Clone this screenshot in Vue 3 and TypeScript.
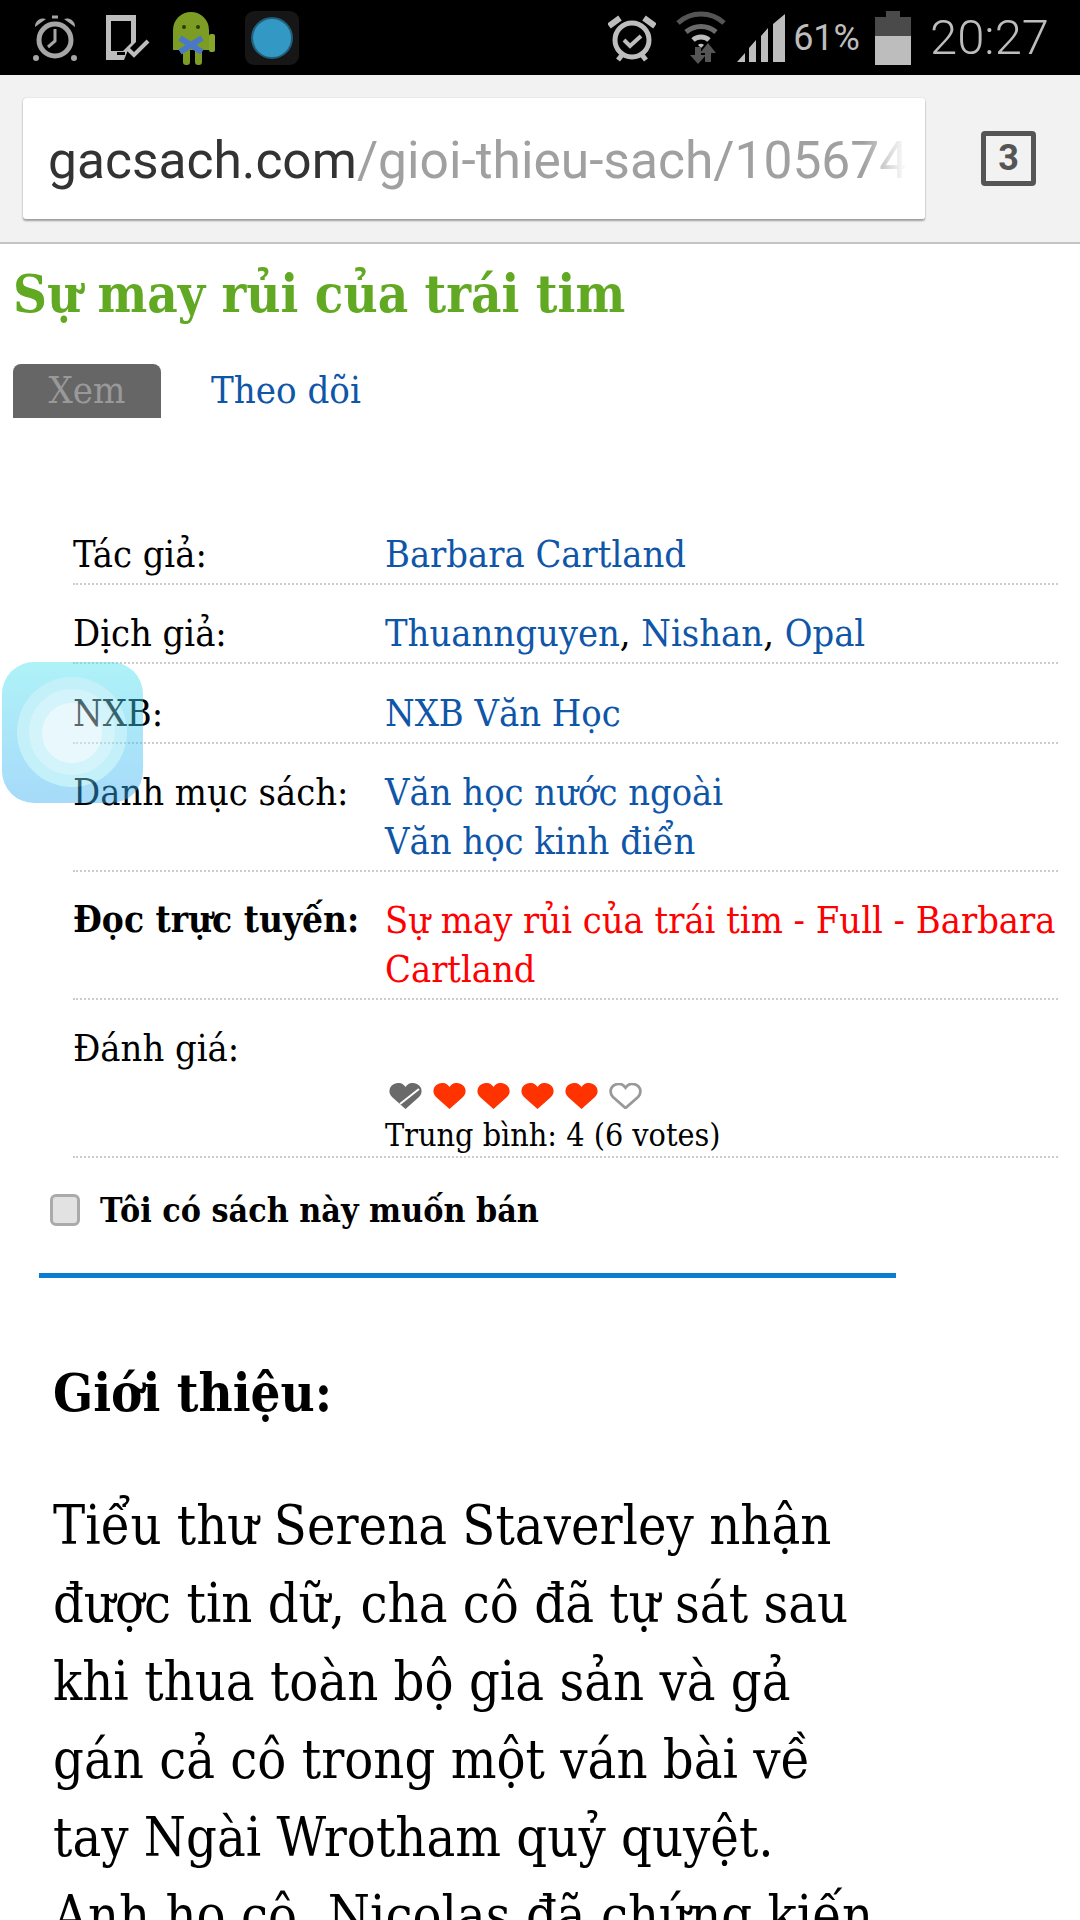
<script setup lang="ts">
const fullHearts = [1, 2, 3, 4]
const intro = [
  'Tiểu thư Serena Staverley nhận',
  'được tin dữ, cha cô đã tự sát sau',
  'khi thua toàn bộ gia sản và gả',
  'gán cả cô trong một ván bài về',
  'tay Ngài Wrotham quỷ quyệt.',
  'Anh họ cô, Nicolas đã chứng kiến',
]
const heart = 'M16.5 26 L3 14 C0 11 0 8 1 5 C3 1 7 0 10 0 C13 0 15 2 16.5 4 C18 2 20 0 23 0 C26 0 30 1 32 5 C33 8 33 11 30 14 Z'
</script>

<template>
  <div class="page">
    <div class="status">
      <div class="status-left">
        <svg width="44" height="48" viewBox="0 0 44 48" fill="none" stroke="#a6a6a6">
          <circle cx="22" cy="26" r="16" stroke-width="5" />
          <path d="M22 15v12l-7 6" stroke-width="3" />
          <path d="M2 13a8 8 0 0 1 11-8zM42 13a8 8 0 0 0-11-8z" fill="#a6a6a6" stroke="none" />
          <path d="M19 3h6" stroke-width="3" />
          <circle cx="3" cy="44" r="3" fill="#a6a6a6" stroke="none" />
          <circle cx="41" cy="44" r="3" fill="#a6a6a6" stroke="none" />
        </svg>
        <svg class="ic-dev" width="44" height="46" viewBox="0 0 44 46">
          <path d="M0 0h30v27l-8 8-4 10H0z" fill="#bdbdbd" />
          <path d="M5 6h20v22l-8 8H5z" fill="#000" />
          <path d="M11 37h8v3h-8z" fill="#000" />
          <path d="M22 34l6 6 14-14" fill="none" stroke="#bdbdbd" stroke-width="4" />
        </svg>
        <svg class="ic-droid" width="44" height="56" viewBox="0 0 44 56">
          <path d="M1 20a18 18 0 0 1 36 0v20H1z" fill="#7c9c24" />
          <rect x="37" y="24" width="6" height="18" rx="2" fill="#86a62c" />
          <rect x="11" y="38" width="7" height="17" rx="3" fill="#7c9c24" />
          <rect x="23" y="38" width="7" height="17" rx="3" fill="#7c9c24" />
          <circle cx="12" cy="17" r="2" fill="#2e3d08" />
          <circle cx="26" cy="17" r="2" fill="#2e3d08" />
          <path d="M8 28l22 14M30 28L8 42" stroke="#4a78c8" stroke-width="6" />
        </svg>
        <div class="ic-dot"><span></span></div>
      </div>
      <div class="status-right">
        <svg width="48" height="48" viewBox="0 0 48 48" fill="none" stroke="#bdbdbd">
          <circle cx="24" cy="26" r="17" stroke-width="5" />
          <path d="M16 26l6 6 11-10" stroke-width="4" />
          <path d="M1 12l11-8M47 12L36 4" stroke-width="6" />
          <path d="M10 46l4-5M38 46l-4-5" stroke-width="5" />
        </svg>
        <svg class="ic-wifi" width="50" height="54" viewBox="0 0 50 54" fill="none" stroke="#555">
          <path d="M2 12a34 34 0 0 1 46 0" stroke-width="5" />
          <path d="M10 21a23 23 0 0 1 30 0" stroke-width="5" stroke="#6a6a6a" />
          <path d="M17 29a12 12 0 0 1 16 0" stroke-width="5" stroke="#bdbdbd" />
          <path d="M22 34a4 4 0 0 1 6 0l-3 3z" fill="#bdbdbd" stroke="none" />
          <path d="M19 36h6v8h5l-8 9-8-9h5z" fill="#555" stroke="none" />
          <path d="M32 32l8 10h-5v9h-6v-9h-5z" fill="#555" stroke="none" />
        </svg>
        <svg class="ic-signal" width="48" height="48" viewBox="0 0 48 48" fill="#bdbdbd">
          <path d="M0 48l8-9v9zM12 48V34l7-8v22zM24 48V22l7-8v34zM36 48V10l12-10v48z" />
        </svg>
        <span class="pct">61%</span>
        <div class="battery"><i></i><b></b></div>
        <span class="clock">20:27</span>
      </div>
    </div>

    <div class="toolbar">
      <div class="url">
        <span class="host">gacsach.com</span><span class="path">/gioi-thieu-sach/105674</span>
      </div>
      <div class="tabs-btn">3</div>
    </div>

    <h1 class="title">Sự may rủi của trái tim</h1>

    <div class="tabs">
      <span class="tab-on">Xem</span>
      <a class="tab-link">Theo dõi</a>
    </div>

    <div class="info">
      <div class="row">
        <div class="label">Tác giả:</div>
        <div class="value"><a>Barbara Cartland</a></div>
      </div>
      <div class="row">
        <div class="label">Dịch giả:</div>
        <div class="value"><a>Thuannguyen</a>, <a>Nishan</a>, <a>Opal</a></div>
      </div>
      <div class="row">
        <div class="label">NXB:</div>
        <div class="value"><a>NXB Văn Học</a></div>
      </div>
      <div class="row">
        <div class="label">Danh mục sách:</div>
        <div class="value"><a>Văn học nước ngoài</a><br /><a>Văn học kinh điển</a></div>
      </div>
      <div class="row">
        <div class="label strong">Đọc trực tuyến:</div>
        <div class="value"><a class="red">Sự may rủi của trái tim - Full - Barbara Cartland</a></div>
      </div>
      <div class="row rating">
        <div class="label">Đánh giá:</div>
        <div class="value">
          <div class="hearts">
            <svg width="33" height="26" viewBox="0 0 33 26">
              <path :d="heart" fill="#6a6a6a" />
              <path d="M11 21L30 6" stroke="#fff" stroke-width="2" />
            </svg>
            <svg v-for="h in fullHearts" :key="h" width="33" height="26" viewBox="0 0 33 26">
              <path :d="heart" fill="#ff3300" />
            </svg>
            <svg width="33" height="26" viewBox="-1 -1 35 28">
              <path :d="heart" fill="#fff" stroke="#999" stroke-width="3" />
            </svg>
          </div>
          <div class="avg">Trung bình: 4 (6 votes)</div>
        </div>
      </div>
    </div>

    <label class="sell"><span class="check"></span>Tôi có sách này muốn bán</label>
    <div class="rule"></div>

    <h2 class="intro-head">Giới thiệu:</h2>
    <p class="intro"><span v-for="l in intro" :key="l">{{ l }}<br /></span></p>

    <div class="assist">
      <div class="assist-ring a"></div>
      <div class="assist-ring b"></div>
      <div class="assist-ring c"></div>
    </div>
  </div>
</template>

<style scoped>
.page {
  position: relative;
  width: 1080px;
  height: 1920px;
  overflow: hidden;
  background: #fff;
  color: #000;
  font-family: "DejaVu Serif", serif;
  font-stretch: condensed;
}
.status {
  height: 75px;
  background: #000;
  display: flex;
  justify-content: space-between;
  align-items: center;
  padding: 0 31px 0 33px;
}
.status-left,
.status-right {
  display: flex;
  align-items: center;
}
.status svg { display: block; }
.ic-dev { margin-left: 29px; }
.ic-droid { margin-left: 22px; }
.ic-dot {
  margin-left: 29px;
  width: 54px;
  height: 54px;
  border-radius: 9px;
  background: #161616;
  display: flex;
  align-items: center;
  justify-content: center;
}
.ic-dot span {
  width: 42px;
  height: 42px;
  box-sizing: border-box;
  border-radius: 50%;
  background: #3399c4;
  border: 2px solid #1f5f7a;
}
.ic-wifi { margin-left: 20px; }
.ic-signal { margin-left: 11px; }
.pct {
  margin-left: 8px;
  font: 36px Roboto, sans-serif;
  color: #bdbdbd;
}
.battery {
  margin-left: 15px;
  width: 36px;
  height: 54px;
  position: relative;
  display: flex;
  flex-direction: column;
  align-items: center;
}
.battery::before {
  content: "";
  width: 14px;
  height: 6px;
  background: #4a4a4a;
}
.battery i {
  width: 36px;
  height: 19px;
  background: #4a4a4a;
}
.battery b {
  width: 36px;
  height: 29px;
  background: #bdbdbd;
}
.clock {
  margin-left: 19px;
  font: 300 49px Roboto, sans-serif;
  color: #bdbdbd;
}
.toolbar {
  box-sizing: border-box;
  background: #f2f2f2;
  border-bottom: 2px solid #c4c4c4;
  height: 169px;
  display: flex;
  align-items: flex-start;
  padding: 23px 44px 0 23px;
  justify-content: space-between;
}
.url {
  position: relative;
  width: 902px;
  height: 121px;
  box-sizing: border-box;
  background: #fff;
  border-radius: 3px;
  box-shadow: 0 0 1px #999, 0 2px 2px rgba(0, 0, 0, 0.35);
  padding: 0 20px 0 25px;
  font: 51.5px/125px Roboto, sans-serif;
  white-space: nowrap;
  overflow: hidden;
}
.host { color: #333; }
.path { color: #a0a0a0; }
.url::after {
  content: "";
  position: absolute;
  top: 0;
  right: 0;
  width: 62px;
  height: 100%;
  background: linear-gradient(to right, rgba(255, 255, 255, 0), #fff 70%);
}
.tabs-btn {
  margin-top: 33px;
  width: 55px;
  height: 55px;
  box-sizing: border-box;
  border: 5px solid #555;
  border-radius: 4px;
  color: #555;
  font: 700 36px/44px "Liberation Sans Narrow", Roboto, sans-serif;
  text-align: center;
}
.title {
  margin: 0;
  padding: 17px 0 0 13px;
  font-size: 52.3px;
  line-height: 66px;
  font-weight: 700;
  color: #62a923;
}
.tabs {
  margin-top: 37px;
  display: flex;
  align-items: flex-start;
  padding-left: 13px;
  font-size: 38px;
  line-height: 52px;
}
.tab-on {
  width: 148px;
  height: 54px;
  text-align: center;
  background: #666;
  color: #999;
  border-radius: 8px 8px 0 0;
}
.tab-link {
  margin-left: 50px;
  color: #0f56a8;
}
.info {
  margin: 87px 22px 0 73px;
  font-size: 37.7px;
  line-height: 48.5px;
}
.row {
  display: flex;
  border-bottom: 2px dotted #ccc;
  padding: 24.5px 0 4.5px;
}
.label {
  width: 312px;
  flex: none;
}
.strong {
  font-weight: 700;
  font-size: 36.7px;
}
.value a { color: #0f56a8; }
.value a.red { color: #ff0000; }
.rating {
  padding: 24px 0 0;
}
.rating .value { padding-top: 59px; }
.hearts {
  display: flex;
  gap: 11px;
  height: 26px;
  margin-left: 4px;
}
.avg {
  margin-top: 5px;
  font-size: 32px;
  line-height: 42px;
}
.sell {
  display: flex;
  align-items: center;
  margin: 28px 0 0 50px;
  font-size: 33.7px;
  font-weight: 700;
  line-height: 48px;
}
.check {
  width: 30px;
  height: 32px;
  box-sizing: border-box;
  border: 3px solid #aaa;
  border-radius: 6px;
  background: #e2e2e2;
  margin-right: 20px;
}
.rule {
  margin: 39px 0 0 39px;
  width: 857px;
  height: 5px;
  background: #0b7dd0;
}
.intro-head {
  margin: 0;
  padding: 80px 0 0 53px;
  font-size: 52.3px;
  line-height: 70px;
  font-weight: 700;
}
.intro {
  margin: 59px 0 0 53px;
  font-size: 53.7px;
  line-height: 78px;
  white-space: nowrap;
}
.assist {
  position: absolute;
  left: 2px;
  top: 662px;
  width: 141px;
  height: 141px;
  border-radius: 32px;
  background: linear-gradient(#49e3ef, #37adf3);
  opacity: 0.44;
}
.assist-ring {
  position: absolute;
  border-radius: 50%;
}
.assist-ring.a { left: 15px; top: 15px; width: 110px; height: 110px; background: #7bdff3; }
.assist-ring.b { left: 27px; top: 27px; width: 86px; height: 86px; background: #9fe8f6; }
.assist-ring.c { left: 40px; top: 41px; width: 60px; height: 60px; background: #cff0fa; }
</style>

<style>
html, body { margin: 0; }
</style>
